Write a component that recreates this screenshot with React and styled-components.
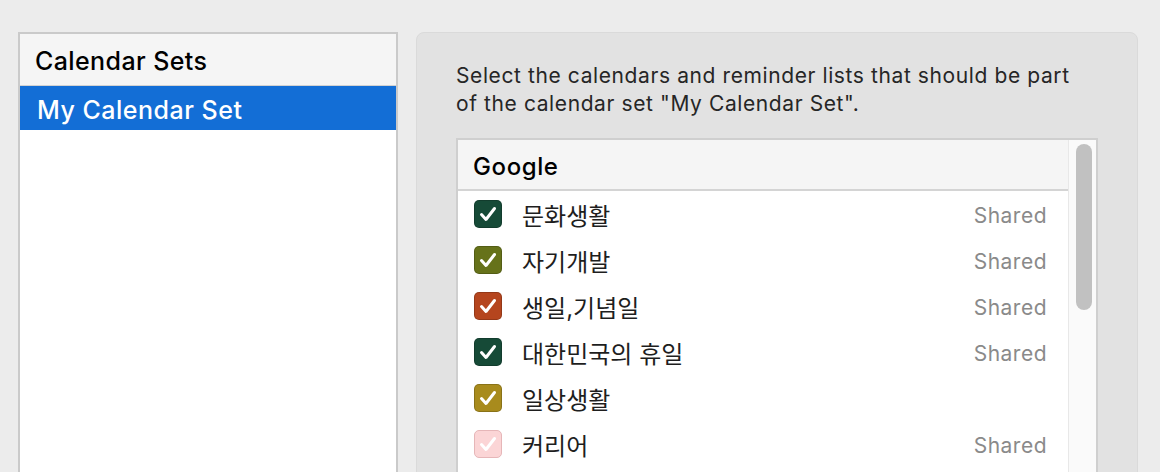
import React from 'react'
import styled, { createGlobalStyle } from 'styled-components'

const GlobalStyle = createGlobalStyle`
  html, body {
    margin: 0;
    padding: 0;
    background: #ececec;
    font-family: Inter, "Noto Sans CJK KR", "Liberation Sans", sans-serif;
    overflow: hidden;
  }
`

const calendars = [
  { name: '문화생활', color: '#164a37', shared: true },
  { name: '자기개발', color: '#66721a', shared: true },
  { name: '생일,기념일', color: '#b5451e', shared: true },
  { name: '대한민국의 휴일', color: '#164a37', shared: true },
  { name: '일상생활', color: '#a88b1d', shared: false },
  { name: '커리어', color: '#fbd5d6', shared: true, faint: true },
]

const Check = ({ color, faint }) => (
  <Box $color={color} $faint={faint}>
    <svg width="26" height="26" viewBox="0 0 26 26">
      <path
        d="M6.5 13.5 L11 18.5 L19.5 7.5"
        fill="none"
        stroke="#fff"
        strokeWidth="3"
        strokeLinecap="round"
        strokeLinejoin="round"
      />
    </svg>
  </Box>
)

const App = () => {
  return (
    <>
      <GlobalStyle />
      <Page>
        <SetList>
          <ListHeader>Calendar Sets</ListHeader>
          <SetItem>My Calendar Set</SetItem>
        </SetList>

        <Detail>
          <Hint>
            Select the calendars and reminder lists that should be part
            <br />
            of the calendar set "My Calendar Set".
          </Hint>
          <Table>
            <TableBody>
              <GroupHeader>Google</GroupHeader>
              {calendars.map((c) => (
                <Row key={c.name}>
                  <Check color={c.color} faint={c.faint} />
                  <Name>{c.name}</Name>
                  {c.shared && <Shared>Shared</Shared>}
                </Row>
              ))}
            </TableBody>
            <Scroller>
              <Thumb />
            </Scroller>
          </Table>
        </Detail>
      </Page>
    </>
  )
}

const Page = styled.div`
  display: flex;
  gap: 18px;
  padding: 32px 0 0 18px;
  height: 472px;
  box-sizing: border-box;
`

const SetList = styled.div`
  width: 380px;
  height: 460px;
  box-sizing: border-box;
  background: #fff;
  border: 2px solid #cacaca;
  display: flex;
  flex-direction: column;
`

const ListHeader = styled.div`
  height: 52px;
  background: #f5f5f5;
  border-bottom: 1px solid #d2d2d2;
  display: flex;
  align-items: center;
  padding: 3px 0 0 15px;
  box-sizing: border-box;
  font-size: 25px;
  letter-spacing: 0.4px;
  font-weight: 500;
  color: #000;
`

const SetItem = styled.div`
  height: 44px;
  background: #136ed6;
  color: #fff;
  display: flex;
  align-items: center;
  padding: 3px 0 0 17px;
  box-sizing: border-box;
  font-size: 25px;
  letter-spacing: 0.5px;
  font-weight: 500;
`

const Detail = styled.div`
  width: 722px;
  height: 460px;
  box-sizing: border-box;
  background: #e2e2e2;
  border: 1px solid #dadada;
  border-radius: 8px;
  padding: 29px 0 0 39px;
`

const Hint = styled.p`
  margin: 0 0 20px;
  font-size: 21px;
  letter-spacing: 0.6px;
  line-height: 28px;
  color: #262626;
`

const Table = styled.div`
  width: 642px;
  height: 360px;
  box-sizing: border-box;
  border: 2px solid #cfcfcf;
  background: #fff;
  display: flex;
`

const TableBody = styled.div`
  flex: 1;
  display: flex;
  flex-direction: column;
`

const GroupHeader = styled.div`
  height: 51px;
  background: #f5f5f5;
  border-bottom: 2px solid #d4d4d4;
  display: flex;
  align-items: center;
  padding: 3px 0 0 15px;
  box-sizing: border-box;
  font-size: 24px;
  letter-spacing: 0.6px;
  font-weight: 500;
  color: #000;
`

const Row = styled.div`
  height: 46px;
  display: flex;
  align-items: center;
  padding: 0 21px 0 16px;
`

const Box = styled.span`
  width: 28px;
  height: 28px;
  box-sizing: border-box;
  border-radius: 5px;
  background: ${(p) => p.$color};
  border: 1px solid ${(p) => (p.$faint ? '#e6b6b8' : 'rgba(0,0,0,0.18)')};
  display: flex;
  align-items: center;
  justify-content: center;
  flex-shrink: 0;
`

const Name = styled.span`
  margin-left: 20px;
  font-size: 24px;
  color: #1e1e1e;
  flex: 1;
`

const Shared = styled.span`
  font-size: 21px;
  letter-spacing: 0.5px;
  color: #8a8a8a;
  padding-top: 3px;
`

const Scroller = styled.div`
  width: 28px;
  background: #fafafa;
  border-left: 1px solid #e8e8e8;
  padding: 4px 0 0 7px;
  box-sizing: border-box;
`

const Thumb = styled.div`
  width: 16px;
  height: 166px;
  border-radius: 8px;
  background: #c1c1c1;
`

export default App
